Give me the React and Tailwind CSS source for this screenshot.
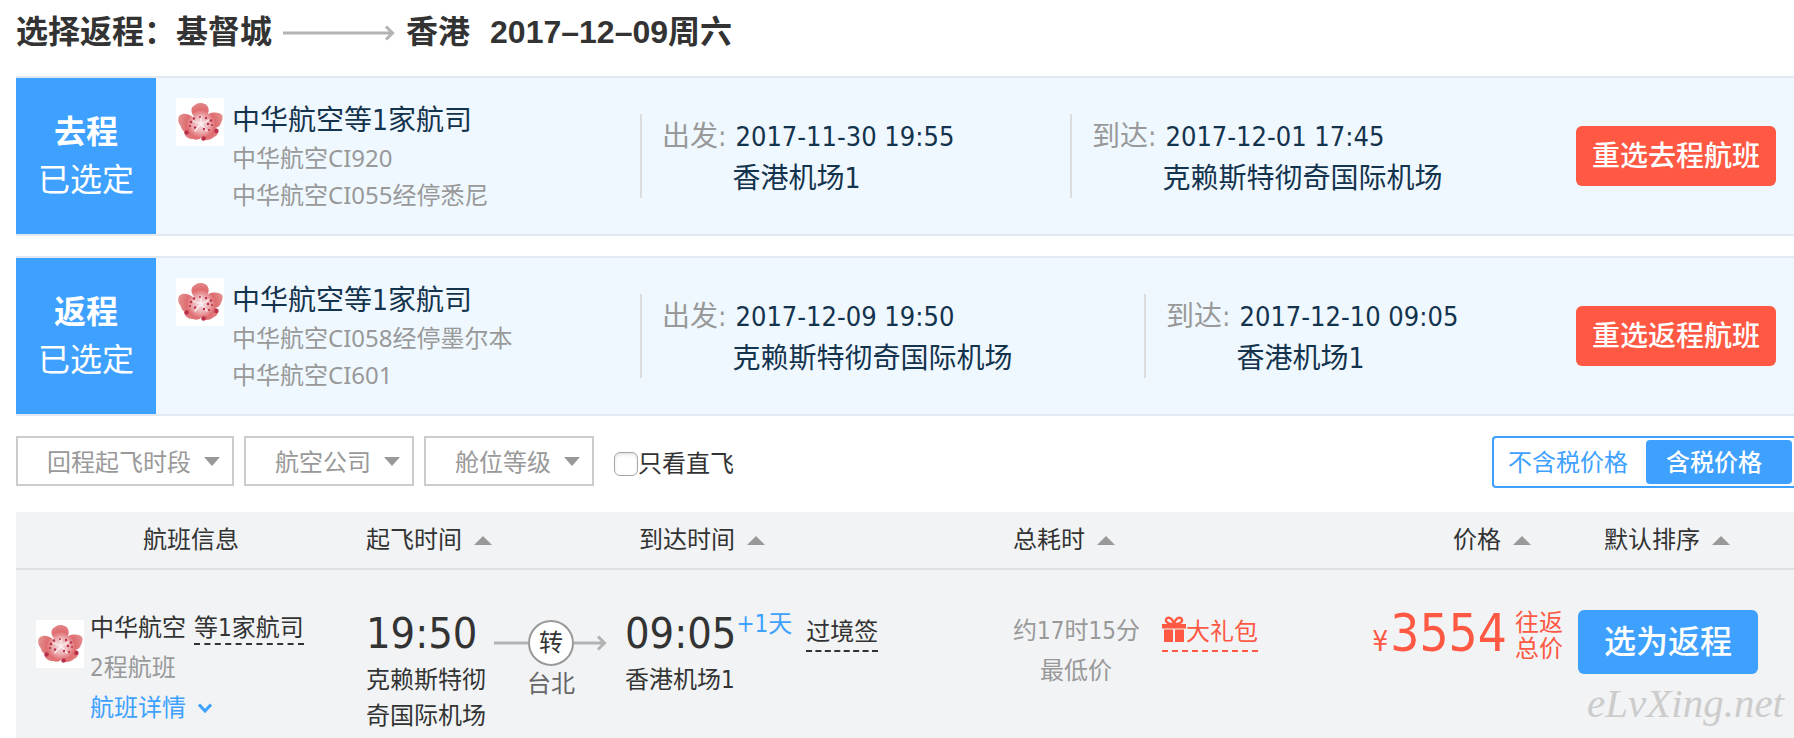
import React from "react";

const cjk = "font-['DejaVu_Sans_Condensed','Noto_Sans_CJK_SC',sans-serif]";

function AirlineLogo() {
  return (
    <svg viewBox="0 0 48 48" className="size-12 shrink-0 bg-white" role="img" aria-label="中华航空">
      <defs>
        <radialGradient id="petals" gradientUnits="userSpaceOnUse" cx="25" cy="26" r="22">
          <stop offset="0" stopColor="#f6dfe2" />
          <stop offset="0.35" stopColor="#eeb3b6" />
          <stop offset="0.65" stopColor="#df6c70" />
          <stop offset="1" stopColor="#e28d8c" />
        </radialGradient>
      </defs>
      <g fill="url(#petals)">
        <path d="M24 25C18 20 15 15 15.500 11.500C16 8 19 7.500 21 5.500C24 4.500 28 5 30 6.500C33 9 33.500 13 31.500 17C30 20 27 23 24 25Z" />
        <path d="M24 26C20 33 13 34 9 33.500C5.500 33 5.500 29 4 27C2 24.500 1.500 20 3.500 17.500C7 14.500 12 15.500 15.500 18C19 20 22 23 24 26Z" />
        <path d="M24 26C26 21 30 16 35 15C39 14 45 14.500 46.500 18C47 21 45.500 24 44 27C42 30 38 30.500 34 30C30 29.500 26 28 24 26Z" />
        <path d="M24 25C26 29 27 34 26 38C24 42 20 42.500 17 41C13 41 9 39 8.500 35C9 30 14 27.500 24 25Z" />
        <path d="M24 25C31 25 38 28 41.500 31C43 35 41 38 38 39C35 42 30 43 27 41C24 37 23 31 24 25Z" />
      </g>
      <g stroke="#fbeef0" strokeWidth="1.200" strokeLinecap="round">
        <path d="M25 26V18M25 26L17 23M25 26L33 22M25 26L19 33M25 26L31 33" />
      </g>
      <g fill="#b8304a">
        <circle cx="15" cy="24" r="1.300" /><circle cx="18" cy="20.500" r="1.200" />
        <circle cx="14" cy="28" r="1.100" /><circle cx="19" cy="29.500" r="1.200" />
        <circle cx="24" cy="19" r="1" /><circle cx="30" cy="20" r="1.200" />
        <circle cx="35" cy="22.500" r="1.300" /><circle cx="32" cy="26" r="1.200" />
        <circle cx="36" cy="27" r="1" /><circle cx="28" cy="31" r="1.200" />
        <circle cx="33" cy="32" r="1.100" />
        <circle cx="10.500" cy="34.500" r="2.200" /><circle cx="27.500" cy="40.500" r="2.300" />
        <circle cx="40.500" cy="33" r="2.200" />
      </g>
    </svg>
  );
}

function TitleArrow() {
  return (
    <svg viewBox="0 0 112 16" className="h-4 w-[112px] shrink-0" fill="none" stroke="#b3b3b3" strokeWidth="3" aria-hidden="true">
      <path d="M0 8H108M103 1.500L109.500 8L103 14.500" />
    </svg>
  );
}

function SortMark() {
  return (
    <svg viewBox="0 0 18 9" className="h-[9px] w-[18px]" fill="#999" aria-hidden="true">
      <path d="M9 0L18 9H0Z" />
    </svg>
  );
}

function SortButton({ children }) {
  return (
    <button type="button" className="inline-flex items-center gap-3 whitespace-nowrap align-top">
      {children}
      <SortMark />
    </button>
  );
}

function Leg({ label, date, place, className }) {
  return (
    <dl className={"grid h-[84px] min-w-0 shrink grid-cols-[auto_1fr] content-start gap-x-1.5 border-l-2 border-[#ddd] pt-0.5 pl-5 text-[28px] leading-[42px] " + className}>
      <dt className="whitespace-nowrap text-[#999]">{label}:</dt>
      <dd className="pl-[3px] text-[27px] whitespace-nowrap">{date}</dd>
      <dd className="col-start-2 whitespace-nowrap">{place}</dd>
    </dl>
  );
}

function SelectedFlight({ name, flights, from, to, fromWidth }) {
  return (
    <section className="flex border-y-2 border-[#e2e9f2] bg-[#eff8ff] text-[#14334d]">
      <div className="flex w-[140px] shrink-0 flex-col justify-center bg-[#3ea1ff] text-center text-[32px] leading-[48px] text-white">
        <strong>{name}</strong>
        <span>已选定</span>
      </div>
      <div className="flex h-[156px] w-[484px] shrink-0 gap-2 pt-5 pl-5">
        <AirlineLogo />
        <div className="whitespace-nowrap">
          <h2 className="pt-1 text-[28px] leading-[38px]">中华航空等1家航司</h2>
          {flights.map(([code, stop]) => (
            <p key={code} className="text-2xl leading-9 text-[#999]">
              中华航空<span className="font-['Noto_Sans']">{code}</span>{stop}
            </p>
          ))}
        </div>
      </div>
      <div className="flex min-w-0 flex-1 items-start pt-9">
        <Leg label="出发" {...from} className={fromWidth} />
        <Leg label="到达" {...to} className="flex-1" />
      </div>
      <button type="button" className="mr-[18px] h-[60px] w-[200px] shrink-0 self-center rounded-md bg-[#ff5843] pt-0.5 text-[28px] font-medium text-white">
        重选{name}航班
      </button>
    </section>
  );
}

function Filter({ label, className }) {
  return (
    <div className={"relative h-[50px] " + className}>
      <select aria-label={label} className="h-full w-full appearance-none rounded-none border-2 border-[#ccc] bg-white pt-1 pl-[29px] text-2xl text-[#999]">
        <option>{label}</option>
      </select>
      <svg viewBox="0 0 16 9" className="pointer-events-none absolute top-[21px] right-3.5 h-[9px] w-4" fill="#999" aria-hidden="true">
        <path d="M0 0H16L8 9Z" />
      </svg>
    </div>
  );
}

function Transfer() {
  return (
    <div className="flex w-[114px] items-center">
      <svg viewBox="0 0 34 16" className="h-4 w-[34px]" stroke="#b3b3b3" strokeWidth="3" aria-hidden="true">
        <path d="M0 8H34" />
      </svg>
      <span className="flex size-[46px] shrink-0 items-center justify-center rounded-full border-2 border-[#999] bg-white text-2xl text-[#333]">转</span>
      <svg viewBox="0 0 34 16" className="h-4 w-[34px]" fill="none" stroke="#b3b3b3" strokeWidth="3" aria-hidden="true">
        <path d="M0 8H29M24 1.500L30.500 8L24 14.500" />
      </svg>
    </div>
  );
}

function Gift() {
  return (
    <svg viewBox="0 0 24 26" className="h-[26px] w-6" aria-hidden="true">
      <path fill="#ff5843" d="M0 8H24V12.500H0ZM2 13.500H11V26H2ZM13 13.500H22V26H13Z" />
      <path fill="none" stroke="#ff5843" strokeWidth="2.400" d="M12 8C9 8 3.500 7.500 4 4C4.500 0.500 10 0.500 12 8C14 0.500 19.500 0.500 20 4C20.500 7.500 15 8 12 8Z" />
    </svg>
  );
}

export default function App() {
  return (
    <main className={"bg-white pl-4 text-2xl text-[#333] " + cjk}>
      <h1 className="flex h-[76px] items-start pt-2 text-[32px] leading-[48px] font-bold whitespace-nowrap font-['Liberation_Sans','Noto_Sans_CJK_SC',sans-serif]">
        <span>选择返程：</span>
        <span>基督城</span>
        <span className="flex h-[50px] items-center px-[11px]"><TitleArrow /></span>
        <span>香港</span>
        <span className="ml-5">2017–12–09周六</span>
      </h1>

      <div className="flex flex-col gap-5">
        <SelectedFlight
          name="去程"
          flights={[["CI920", ""], ["CI055", "经停悉尼"]]}
          from={{ date: "2017-11-30 19:55", place: "香港机场1" }}
          to={{ date: "2017-12-01 17:45", place: "克赖斯特彻奇国际机场" }}
          fromWidth="w-[430px]"
        />
        <SelectedFlight
          name="返程"
          flights={[["CI058", "经停墨尔本"], ["CI601", ""]]}
          from={{ date: "2017-12-09 19:50", place: "克赖斯特彻奇国际机场" }}
          to={{ date: "2017-12-10 09:05", place: "香港机场1" }}
          fromWidth="w-[504px]"
        />
      </div>

      <div className="flex h-24 items-start gap-2.5 pt-5">
        <Filter label="回程起飞时段" className="w-[218px]" />
        <Filter label="航空公司" className="w-[170px]" />
        <Filter label="舱位等级" className="w-[170px]" />
        <label className="ml-2.5 flex h-14 items-center whitespace-nowrap">
          <input type="checkbox" className="size-6 appearance-none rounded-md border border-[#a6a6a6] bg-white shadow-[inset_0_2px_3px_#e5e5e5]" />
          只看直飞
        </label>
        <div className="ml-auto flex h-[52px] rounded-l border-y-2 border-l-2 border-[#3ea1ff] bg-white py-0.5 pr-0.5">
          <button type="button" className="w-[152px] pt-0.5 pr-1 text-center whitespace-nowrap text-[#3ea1ff]">不含税价格</button>
          <button type="button" aria-pressed="true" className="w-[146px] rounded bg-[#3ea1ff] pt-0.5 pr-2.5 text-center font-medium whitespace-nowrap text-white">含税价格</button>
        </div>
      </div>

      <div className="relative">
        <table className="w-full table-fixed bg-[#f1f3f5] text-left">
          <colgroup>
            <col className="w-[350px]" />
            <col className="w-[124px]" />
            <col className="w-[135px]" />
            <col className="w-[388px]" />
            <col className="w-[126px]" />
            <col />
            <col className="w-[240px]" />
            <col className="w-[216px]" />
          </colgroup>
          <thead>
            <tr className="h-[57px] border-b-2 border-[#dddfe2] *:p-0 *:font-normal">
              <th scope="col"><div className="text-center">航班信息</div></th>
              <th scope="col" colSpan={2}><SortButton>起飞时间</SortButton></th>
              <th scope="col"><div className="pl-3.5"><SortButton>到达时间</SortButton></div></th>
              <th scope="col"><SortButton>总耗时</SortButton></th>
              <th scope="col" colSpan={2}><div className="pr-[47px] text-right"><SortButton>价格</SortButton></div></th>
              <th scope="col"><div className="pl-[26px]"><SortButton>默认排序</SortButton></div></th>
            </tr>
          </thead>
          <tbody>
            <tr className="h-[169px] align-top *:p-0">
              <td>
                <div className="flex gap-1.5 pt-[50px] pl-5">
                  <AirlineLogo />
                  <div className="-mt-3 leading-10 whitespace-nowrap">
                    <p className="flex items-start gap-2">中华航空 <span className="h-[37px] border-b-2 border-dashed border-[#333]">等1家航司</span></p>
                    <p className="text-[#999]">2程航班</p>
                    <a href="#details" className="flex items-center gap-3 text-[#3ea1ff]">
                      航班详情
                      <svg viewBox="0 0 14 10" className="h-2.5 w-3.5" fill="none" stroke="#3ea1ff" strokeWidth="3" aria-hidden="true">
                        <path d="M1 1.500L7 8L13 1.500" />
                      </svg>
                    </a>
                  </div>
                </div>
              </td>
              <td>
                <div className="pt-9 leading-9">
                  <p className="h-14 text-[43px] leading-[54px]">19:50</p>
                  <p>克赖斯特彻奇国际机场</p>
                </div>
              </td>
              <td>
                <div className="flex flex-col pt-[50px] pl-1">
                  <Transfer />
                  <p className="w-[114px] text-center leading-9 text-[#666]">台北</p>
                </div>
              </td>
              <td>
                <div className="pt-9 leading-9 whitespace-nowrap">
                  <div className="flex h-14 items-start">
                    <span className="text-[43px] leading-[54px]">09:05</span>
                    <span className="text-[#3ea1ff]">+1天</span>
                    <span className="mt-2 ml-3.5 h-[38px] border-b-2 border-dashed border-[#333]">过境签</span>
                  </div>
                  <p>香港机场1</p>
                </div>
              </td>
              <td>
                <div className="pt-[41px] text-center leading-10 whitespace-nowrap text-[#999]">
                  <p>约17时15分</p>
                  <p>最低价</p>
                </div>
              </td>
              <td>
                <div className="flex pt-11 pl-[23px] leading-9 text-[#ff5843]">
                  <a href="#gift" className="flex h-[38px] items-start border-b-2 border-dashed border-[#ff5843] whitespace-nowrap">
                    <span className="flex h-[30px] items-center"><Gift /></span>大礼包
                  </a>
                </div>
              </td>
              <td>
                <div className="flex items-start justify-end pt-9 pr-[15px] whitespace-nowrap text-[#ff5843]">
                  <p className="flex items-baseline gap-0.5"><span className="text-[28px]">¥</span><span className="text-[51px] leading-[56px]">3554</span></p>
                  <p className="mt-1 ml-2 flex flex-col leading-[26px]"><span>往返</span><span>总价</span></p>
                </div>
              </td>
              <td>
                <div className="pt-10">
                  <button type="button" className="h-16 w-[180px] rounded-md bg-[#3ea1ff] text-[32px] font-medium text-white">选为返程</button>
                </div>
              </td>
            </tr>
          </tbody>
        </table>
        <span className="absolute right-2.5 bottom-3 text-[41px] leading-[46px] text-[#ccc] italic font-['Liberation_Serif',serif]">eLvXing.net</span>
      </div>
    </main>
  );
}
